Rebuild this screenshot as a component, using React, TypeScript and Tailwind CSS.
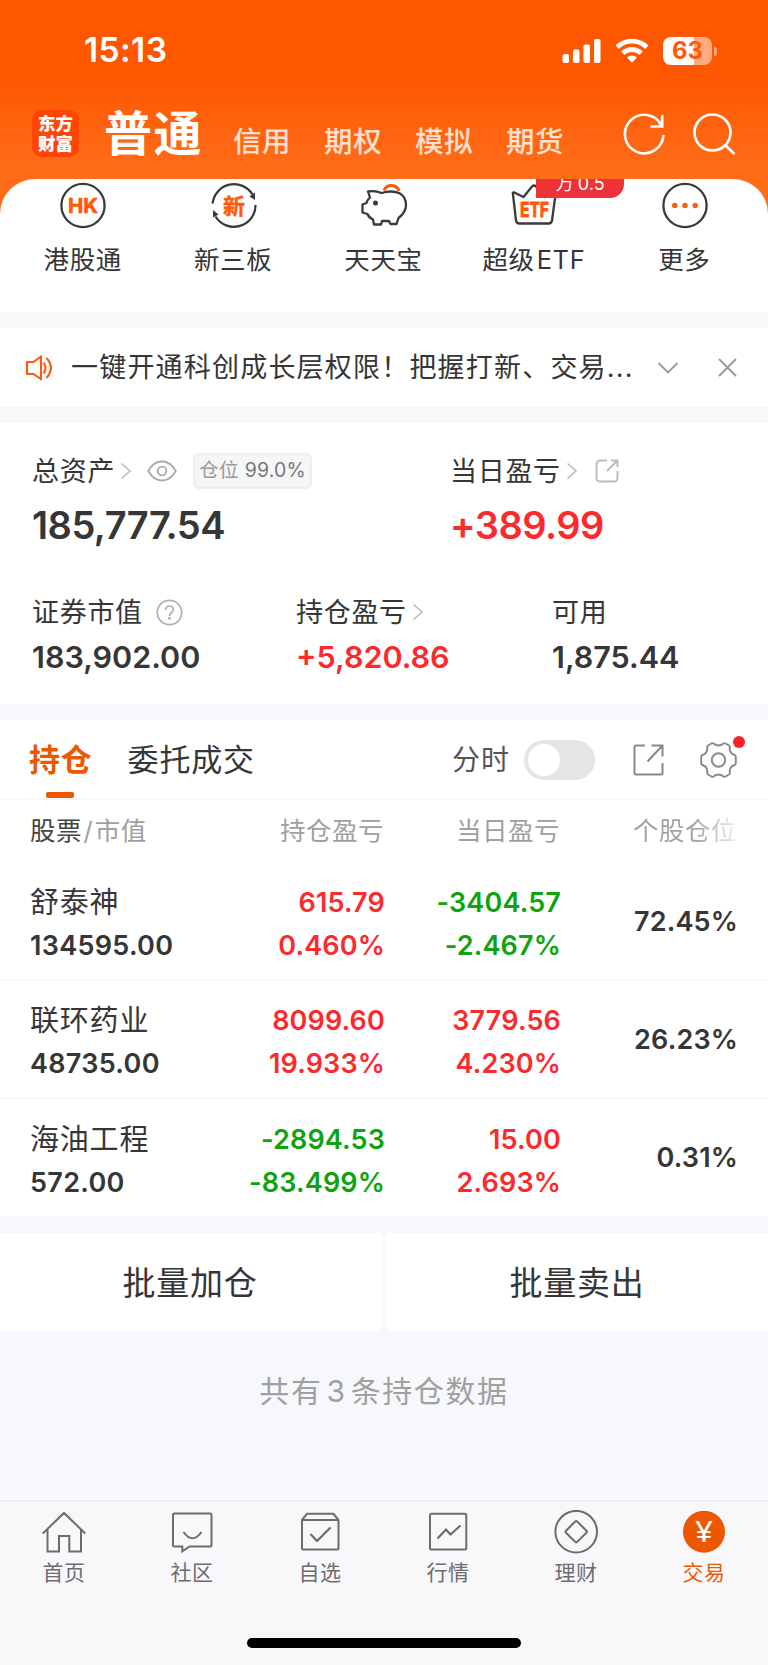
import type { ReactNode } from 'react';
import clsx from 'clsx';

const RED = 'text-[#fa2a2d]';
const GREEN = 'text-[#0fa30f]';

const modes = ['信用', '期权', '模拟', '期货'];

const holdings = [
  { name: '舒泰神', value: '134595.00', pnl: '615.79', pnlPct: '0.460%', day: '-3404.57', dayPct: '-2.467%', weight: '72.45%' },
  { name: '联环药业', value: '48735.00', pnl: '8099.60', pnlPct: '19.933%', day: '3779.56', dayPct: '4.230%', weight: '26.23%' },
  { name: '海油工程', value: '572.00', pnl: '-2894.53', pnlPct: '-83.499%', day: '15.00', dayPct: '2.693%', weight: '0.31%' },
];

const toneOf = (n: string) => (n.startsWith('-') ? GREEN : RED);

function StatusBar() {
  return (
    <div className="flex h-[102px] items-center pl-[84px] pr-[51px] text-white">
      <span className="text-[33.5px] font-semibold leading-none tracking-[0.4px]">15:13</span>
      <svg className="ml-auto" width="40" height="26" viewBox="0 0 40 26" fill="currentColor">
        <rect x="0.5" y="16" width="6.5" height="9" rx="2" />
        <rect x="11" y="11.5" width="6.5" height="13.5" rx="2" />
        <rect x="21.5" y="6.5" width="6.5" height="18.5" rx="2" />
        <rect x="32" y="1" width="6.5" height="24" rx="2" />
      </svg>
      <svg className="ml-[13px]" width="34" height="26" viewBox="0 0 34 26" fill="none" stroke="currentColor" strokeWidth="4.8">
        <path d="M2.2 9.3a21 21 0 0 1 29.6 0" />
        <path d="M7.8 15.3a13 13 0 0 1 18.4 0" />
        <path d="M17 24.8l-5-5.2a7.2 7.2 0 0 1 10 0z" fill="currentColor" stroke="none" />
      </svg>
      <div className="ml-[14px] flex h-[28px] w-[49px] items-center justify-center rounded-[8px] bg-linear-to-r from-white from-63% to-white/50 to-63% text-[24px] font-bold leading-none text-[#ff5a08]">
        63
      </div>
      <div className="ml-[2px] h-[9px] w-[3px] rounded-r-full bg-white/50" />
    </div>
  );
}

function TopBar() {
  return (
    <div className="flex h-[77px] px-[32px] text-white">
      <div className="mt-[8px] flex size-[47px] flex-col items-center justify-center rounded-[9px] bg-[#ff4606] text-[17.5px] font-black leading-[20px]">
        <span>东方</span>
        <span>财富</span>
      </div>
      <h1 className="ml-[25px] mt-[7px] text-[48px] font-bold leading-[50px] tracking-[1.5px]">普通</h1>
      <div className="ml-[30px] mt-[25px] flex gap-[33px] text-[28.5px] font-medium leading-[30px] text-white/80">
        {modes.map((m) => (
          <span key={m} className="w-[58px] tracking-[0.5px] whitespace-nowrap">{m}</span>
        ))}
      </div>
      <svg className="ml-auto mt-[10px]" width="44" height="44" viewBox="0 0 44 44" fill="none" stroke="currentColor" strokeWidth="2.6">
        <path d="M41.5 23A19.300 19.300 0 1 1 39.500 13.500" />
        <path d="M40.200 3V14.500H28.500" />
      </svg>
      <svg className="ml-[26px] mt-[10px]" width="44" height="44" viewBox="0 0 44 44" fill="none" stroke="currentColor" strokeWidth="2.6">
        <circle cx="20.500" cy="20.500" r="18" />
        <path d="M33 33l9.500 9" />
      </svg>
    </div>
  );
}

function Shortcut({ label, children }: { label: ReactNode; children: ReactNode }) {
  return (
    <div className="relative flex flex-col items-center pt-[3px]">
      <svg width="48" height="48" viewBox="0 0 48 48" fill="none" stroke="#3a3a3a" strokeWidth="2.3">
        {children}
      </svg>
      <span className="mt-[15px] -ml-px whitespace-nowrap text-[25.5px] leading-[30px] tracking-[0.6px]">{label}</span>
    </div>
  );
}

function Shortcuts() {
  return (
    <section className="grid h-[133px] grid-cols-5 overflow-hidden rounded-t-[35px] bg-white px-[8px]">
      <Shortcut label="港股通">
        <circle cx="24" cy="23.5" r="21.6" />
        <text x="24" y="31" textAnchor="middle" fontSize="20.5" fontWeight="700" fill="#ff5a0a" stroke="#ff5a0a" strokeWidth="0.6">HK</text>
      </Shortcut>
      <Shortcut label="新三板">
        <path d="M2.6 21.500A21.600 21.600 0 0 1 42.500 12.500M45.500 23A21.600 21.600 0 0 1 5.500 34.500" />
        <path d="M39.500 14.500l5.500 3.500V10.500zM8.500 32.500L3 35.500V28z" fill="#3a3a3a" stroke="none" />
        <text x="24" y="31.5" textAnchor="middle" fontSize="22" fontWeight="700" fill="#ff5a0a" stroke="#ff5a0a" strokeWidth="0.4">新</text>
      </Shortcut>
      <Shortcut label="天天宝">
        <path d="M8 9.500c4-0.800 9-0.500 13.500 1.500 6-1.800 13.500-1.800 18 0.200 4 2 6.500 6.300 6.500 11.800 0 5.500-3.500 10-7.500 13l-2 6h-6l-1.500-3h-7l-1 3.500h-7l-1-5c-2.500-1-4.500-3-5.500-5.500l-5-1.500v-8l4-1.500c0.500-2 1.800-4 3.500-5.500z" strokeLinejoin="round" />
        <circle cx="15.500" cy="21" r="2.5" fill="#3a3a3a" stroke="none" />
        <path d="M24 8.500a8 8 0 0 1 15 0.500" stroke="#ff5a0a" strokeWidth="3.2" />
      </Shortcut>
      <div className="relative">
        <Shortcut label={<>超级<span className="ml-[2px]">ETF</span></>}>
          <path d="M3 12.500q-1-2.500 1.500-2l9 4.500L22 4.500q2-2 4 0L34.500 15l9-4.500q2.500-0.500 2 2L42 38.500q-0.500 3-3.500 3H9.500q-3 0-3.500-3z" />
          <text x="24.5" y="35" textAnchor="middle" fontSize="20.5" fontWeight="700" textLength="29" lengthAdjust="spacingAndGlyphs" fill="#ff5a0a" stroke="#ff5a0a" strokeWidth="0.9">ETF</text>
        </Shortcut>
        <div className="absolute -top-[10px] left-[77px] flex h-[29px] w-[88px] items-center justify-center gap-[4px] rounded-br-[14px] bg-[#ed3239] text-[18px] leading-none text-white">
          <span>万</span>
          <span>0.5</span>
        </div>
      </div>
      <Shortcut label="更多">
        <circle cx="24" cy="23.5" r="21.6" />
        <g fill="#ff5a0a" stroke="none">
          <circle cx="13.8" cy="23.5" r="2.7" />
          <circle cx="24" cy="23.5" r="2.7" />
          <circle cx="34.2" cy="23.5" r="2.7" />
        </g>
      </Shortcut>
    </section>
  );
}

function Notice() {
  return (
    <section className="mt-[16px] flex h-[79px] items-center bg-white pl-[25px] pr-[31px]">
      <svg width="29" height="28" viewBox="0 0 29 28" fill="none" stroke="#ff5a0a" strokeWidth="2.1">
        <path d="M2 8h6.500L16 2.500v22.500L8.500 20H2z" />
        <path d="M18.500 8.500q4 5.500 0 11M21.500 4q9 9.500 0 20" />
      </svg>
      <p className="ml-[17px] w-[562px] whitespace-nowrap text-[27px] leading-[36px] tracking-[1.2px]">
        一键开通科创成长层权限！把握打新、交易...
      </p>
      <svg className="ml-auto" width="22" height="14" viewBox="0 0 22 14" fill="none" stroke="#999" strokeWidth="1.8">
        <path d="M1.500 2L11 11.500 20.500 2" />
      </svg>
      <svg className="ml-[39px]" width="19" height="19" viewBox="0 0 19 19" fill="none" stroke="#999" strokeWidth="1.8">
        <path d="M1 1l17 17M18 1L1 18" />
      </svg>
    </section>
  );
}

function Chevron() {
  return (
    <svg className="ml-[5px]" width="12" height="18" viewBox="0 0 12 18" fill="none" stroke="#bbb" strokeWidth="1.6">
      <path d="M1.500 1.500L10 9l-8.500 7.500" />
    </svg>
  );
}

const labelClass = 'flex h-[36px] items-center whitespace-nowrap text-[27px] leading-none tracking-[0.7px]';
const bigClass = 'mt-[16px] text-[38px] font-semibold leading-[40px] -tracking-[0.5px]';
const midClass = 'mt-[10px] text-[30.5px] font-semibold leading-[34px]';

function Assets() {
  return (
    <section className="mt-[16px] h-[281px] bg-white pl-[32px] pt-[30px]">
      <div className="grid grid-cols-[418px_1fr]">
        <div>
          <div className={labelClass}>
            总资产
            <Chevron />
            <svg className="ml-[15px]" width="30" height="22" viewBox="0 0 30 22" fill="none" stroke="#aaa" strokeWidth="1.8">
              <path d="M1.200 11Q6.500 1.500 15 1.500T28.800 11Q23.500 20.500 15 20.500T1.200 11z" />
              <circle cx="15" cy="11" r="4.3" />
            </svg>
            <span className="ml-[16px] flex h-[36px] w-[119px] items-center justify-center gap-[6px] rounded-[6px] border-2 border-[#ededf2] bg-[#f6f6f9] text-[19.5px] tracking-[0.2px] text-[#999]">
              仓位
              <span className="text-[#777]">99.0%</span>
            </span>
          </div>
          <div className={bigClass}>185,777.54</div>
        </div>
        <div>
          <div className={labelClass}>
            当日盈亏
            <Chevron />
            <svg className="ml-[17px]" width="24" height="24" viewBox="0 0 24 24" fill="none" stroke="#bbb" strokeWidth="1.9">
              <path d="M12 1.500H5A3.500 3.500 0 0 0 1.500 5v14A3.500 3.500 0 0 0 5 22.500h14a3.500 3.500 0 0 0 3.500-3.500v-7M16 1.500h6.500V8M22 2L12 12" />
            </svg>
          </div>
          <div className={clsx(bigClass, RED)}>+389.99</div>
        </div>
      </div>
      <div className="mt-[49px] grid grid-cols-[264px_256px_1fr]">
        <div>
          <div className={labelClass}>
            证券市值
            <svg className="ml-[13px]" width="27" height="27" viewBox="0 0 27 27" fill="none" stroke="#b0b0b0" strokeWidth="1.7">
              <circle cx="13.500" cy="13.500" r="12.200" />
              <path d="M9.800 11q0-4 3.700-4t3.700 3.500q0 1.700-1.900 3.200-1.800 1.300-1.800 3.300" />
              <circle cx="13.500" cy="19.500" r="0.600" fill="#b0b0b0" />
            </svg>
          </div>
          <div className={midClass}>183,902.00</div>
        </div>
        <div>
          <div className={labelClass}>
            持仓盈亏
            <Chevron />
          </div>
          <div className={clsx(midClass, RED)}>+5,820.86</div>
        </div>
        <div>
          <div className={labelClass}>可用</div>
          <div className={midClass}>1,875.44</div>
        </div>
      </div>
    </section>
  );
}

function HoldingTabs() {
  return (
    <div className="flex h-[80px] items-center border-b-2 border-[#f7f7f9] pl-[29px] pr-[31px] pt-[2px]">
      <div className="relative flex h-full items-center text-[31px] font-bold tracking-[0.8px] text-[#ec5800]">
        持仓
        <span className="absolute bottom-0 left-[17px] h-[6px] w-[28px] rounded-[2px] bg-[#ec5800]" />
      </div>
      <div className="ml-[35px] text-[31px] tracking-[0.8px]">委托成交</div>
      <div className="ml-auto text-[28px] tracking-[1px] text-[#555]">分时</div>
      <div className="ml-[14px] flex h-[40px] w-[71px] items-center rounded-full bg-[#e5e5e7] p-[4px]">
        <div className="size-[32px] rounded-full bg-white" />
      </div>
      <svg className="ml-[38px]" width="31" height="32" viewBox="0 0 31 32" fill="none" stroke="#888" strokeWidth="2">
        <path d="M12 1.500H3A1.500 1.500 0 0 0 1.500 3v26A1.500 1.500 0 0 0 3 30.500h25a1.500 1.500 0 0 0 1.500-1.500V19M18.500 1.500h11v11M29 2L14.500 17.500" />
      </svg>
      <div className="relative ml-[36px]">
        <svg width="37" height="38" viewBox="0 0 37 38" fill="none" stroke="#888" strokeWidth="1.9" strokeLinejoin="round">
          <path d="M13.500 2.500Q18.500 6.500 23.500 2.500q1-0.700 2 0l3.500 2q1 0.700 0.800 2Q29 12 34.500 14q1.300 0.500 1.300 1.800v6.400q0 1.300-1.300 1.800Q29 26 29.800 31.500q0.200 1.300-0.800 2l-3.500 2q-1 0.700-2 0Q18.500 31.500 13.500 35.500q-1 0.700-2 0l-3.500-2q-1-0.700-0.800-2Q8 26 2.500 24q-1.300-0.500-1.300-1.800v-6.400q0-1.300 1.300-1.800Q8 12 7.200 6.500q-0.200-1.300 0.800-2l3.500-2q1-0.700 2 0z" />
          <circle cx="18.500" cy="19" r="6.700" />
        </svg>
        <span className="absolute -right-[8px] -top-[5px] size-[12px] rounded-full bg-[#fa2323]" />
      </div>
    </div>
  );
}

const gridClass = 'grid grid-cols-[170px_184px_176px_177px] pl-[30px]';
const numClass = 'text-[27px] font-semibold leading-[43px] tracking-[0.3px]';
const rightNumClass = 'relative left-px pt-[6px] text-[27px] font-semibold leading-[43px] tracking-[0.15px]';

function Holdings() {
  return (
    <section className="mt-[16px] h-[496px] bg-white">
      <HoldingTabs />
      <div className={clsx(gridClass, 'h-[63px] items-center text-right text-[25.5px] tracking-[0.5px] text-[#a0a0a0]')}>
        <div className="text-left">
          <span className="text-[#444]">股票</span>
          <span className="mx-[1.5px]">/</span>
          市值
        </div>
        <div>持仓盈亏</div>
        <div>当日盈亏</div>
        <div className="bg-linear-to-r from-[#a0a0a0] from-75% to-[#eeeeee] bg-clip-text text-transparent">个股仓位</div>
      </div>
      {holdings.map((h, i) => (
        <div key={h.name} className={clsx(gridClass, 'items-center text-right', i < 2 ? 'h-[118px] border-b-2 border-[#f8f8fa]' : 'h-[117px]')}>
          <div className="pt-[6px] text-left">
            <div className="text-[29px] leading-[43px] tracking-[0.8px]">{h.name}</div>
            <div className={numClass}>{h.value}</div>
          </div>
          <div className={clsx(rightNumClass, toneOf(h.pnl))}>
            <div>{h.pnl}</div>
            <div>{h.pnlPct}</div>
          </div>
          <div className={clsx(rightNumClass, toneOf(h.day))}>
            <div>{h.day}</div>
            <div>{h.dayPct}</div>
          </div>
          <div className="relative left-px pt-[2px] text-[27px] font-semibold tracking-[0.15px]">{h.weight}</div>
        </div>
      ))}
    </section>
  );
}

function NavItem({ label, active, children }: { label: string; active?: boolean; children: ReactNode }) {
  return (
    <div className={clsx('flex flex-col items-center pt-[8px]', active ? 'text-[#ec5800]' : 'text-[#6c6c70]')}>
      <svg width="44" height="44" viewBox="0 0 44 44" fill="none" stroke="currentColor" strokeWidth="2">
        {children}
      </svg>
      <span className="mt-[6px] text-[21px] leading-[26px] tracking-[0.5px]">{label}</span>
    </div>
  );
}

function BottomNav() {
  return (
    <nav className="mt-auto h-[165px] border-t-2 border-[#edeef3] bg-[#f8f8fb]">
      <div className="grid grid-cols-6">
        <NavItem label="首页">
          <path d="M0.700 23.500L22 3l21.300 20.500M5.500 19v22.500H17V26h10.300v15.500H39V19" />
        </NavItem>
        <NavItem label="社区">
          <path d="M4.500 3.500h35.500a1.500 1.500 0 0 1 1.500 1.500v30a1.500 1.500 0 0 1-1.500 1.500H19.500L12.300 41.300V36.500H4.500A1.500 1.500 0 0 1 3 35V5a1.500 1.500 0 0 1 1.500-1.500z" />
          <path d="M13.500 22q9 12.500 18 0" />
        </NavItem>
        <NavItem label="自选">
          <path d="M4 10h36.500M4 10L9 3.800h26.500l5 6.200v28a1.500 1.500 0 0 1-1.500 1.500H5.500A1.500 1.500 0 0 1 4 38z" />
          <path d="M12.500 24l6.500 7L32.500 17.500" strokeWidth="2.200" />
        </NavItem>
        <NavItem label="行情">
          <rect x="4" y="3.7" width="36.3" height="35.8" rx="1.5" />
          <path d="M11.500 28.500l8.500-9 4.500 5L34.500 15.500" strokeWidth="2.200" />
        </NavItem>
        <NavItem label="理财">
          <circle cx="22.2" cy="21.7" r="20.8" />
          <path d="M21.200 11.500q1-1 2 0l9.200 9.200q1 1 0 2l-9.200 9.200q-1 1-2 0L12 22.700q-1-1 0-2z" />
        </NavItem>
        <NavItem label="交易" active>
          <circle cx="22" cy="21.7" r="21" fill="currentColor" stroke="none" />
          <text x="22" y="32" textAnchor="middle" fontSize="28" textLength="18" lengthAdjust="spacingAndGlyphs" fill="#fff" stroke="none">¥</text>
        </NavItem>
      </div>
      <div className="mx-auto mt-[52px] h-[10px] w-[274px] rounded-full bg-black" />
    </nav>
  );
}

export default function App() {
  return (
    <main className="flex h-[1665px] w-[768px] flex-col overflow-hidden bg-[#f7f8fb] font-['Inter','Noto_Sans_CJK_SC',sans-serif] text-[#363636]">
      <div className="bg-linear-to-b from-[#ff5600] from-24% to-[#ff6d18] to-55%">
        <StatusBar />
        <TopBar />
        <Shortcuts />
      </div>
      <Notice />
      <Assets />
      <Holdings />
      <div className="mt-[17px] grid h-[98px] grid-cols-2 gap-[4px] text-[33px] tracking-[0.8px]">
        <button className="bg-white pt-[3px] pr-[2px]">批量加仓</button>
        <button className="bg-white pt-[3px]">批量卖出</button>
      </div>
      <p className="mt-[40px] text-center text-[30px] leading-[40px] tracking-[1.6px] text-[#a0a0a0]">
        共有<span className="mx-[4px]">3</span>条持仓数据
      </p>
      <BottomNav />
    </main>
  );
}
